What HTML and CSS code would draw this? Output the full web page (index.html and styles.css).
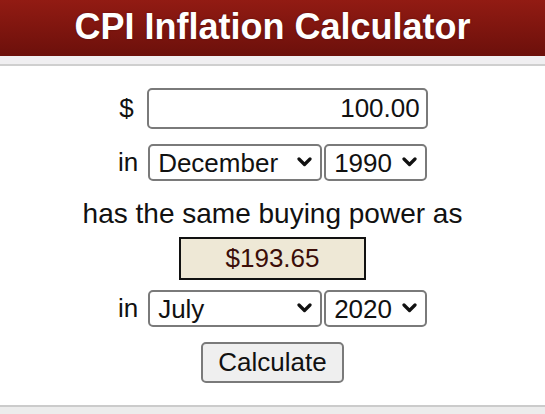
FILE: index.html
```html
<!DOCTYPE html>
<html lang="en">
<head>
    <meta charset="UTF-8">
    <meta name="viewport" content="width=device-width, initial-scale=1.0">
    <title>CPI Inflation Calculator</title>
    <link rel="stylesheet" href="styles.css">
</head>
<body>
    <header class="calc-header">
        <h1>CPI Inflation Calculator</h1>
    </header>
    <div class="header-strip"></div>

    <form class="calc-form" onsubmit="return false">
        <div class="calc-row amount-row">
            <span class="calc-label">$</span>
            <input class="amount" type="text" value="100.00">
        </div>

        <div class="calc-row row-gap">
            <span class="calc-label">in</span>
            <span class="select-wrap month">
                <select>
                    <option>December</option>
                </select>
                <svg class="chevron" viewBox="0 0 15 10"><polyline points="2,2 7.5,7.5 13,2"/></svg>
            </span>
            <span class="select-wrap year">
                <select>
                    <option>1990</option>
                </select>
                <svg class="chevron" viewBox="0 0 15 10"><polyline points="2,2 7.5,7.5 13,2"/></svg>
            </span>
        </div>

        <p class="sentence">has the same buying power as</p>

        <div class="result">$193.65</div>

        <div class="calc-row row-gap-small">
            <span class="calc-label">in</span>
            <span class="select-wrap month">
                <select>
                    <option>July</option>
                </select>
                <svg class="chevron" viewBox="0 0 15 10"><polyline points="2,2 7.5,7.5 13,2"/></svg>
            </span>
            <span class="select-wrap year">
                <select>
                    <option>2020</option>
                </select>
                <svg class="chevron" viewBox="0 0 15 10"><polyline points="2,2 7.5,7.5 13,2"/></svg>
            </span>
        </div>

        <button class="calc-button" type="submit">Calculate</button>
    </form>

    <div class="page-footer"></div>
</body>
</html>
```

FILE: styles.css
```css
/* Page de base */
body {
    margin: 0;
    font-family: "Liberation Sans", Arial, sans-serif;
    color: #111;
    background: #fff;
}

/* Bandeau rouge du titre */
.calc-header {
    height: 56px;
    background: linear-gradient(#921b13, #6c100b);
    display: flex;
    align-items: center;
    justify-content: center;
}

.calc-header h1 {
    margin: 0;
    padding-bottom: 3px;
    color: #fff;
    font-size: 36px;
    font-weight: bold;
    text-shadow: 0 0 2px rgba(0, 0, 0, 0.35);
}

.header-strip {
    height: 8px;
    background: #f0eff1;
    border-bottom: 2px solid #cfcfcf;
}

/* Formulaire */
.calc-form {
    display: flex;
    flex-direction: column;
    align-items: center;
    padding-top: 22px;
    font-size: 26px;
}

.calc-row {
    display: flex;
    align-items: center;
    gap: 2px;
}

.amount-row {
    padding-left: 2px;
}

.amount-row .calc-label {
    margin-right: 11px;
}

.row-gap {
    margin-top: 15px;
}

.row-gap-small {
    margin-top: 10px;
}

.calc-label {
    margin-right: 8px;
}

.amount {
    box-sizing: border-box;
    width: 281px;
    height: 41px;
    border: 2px solid #7a7a7a;
    border-radius: 5px;
    padding: 0 6px;
    font-family: inherit;
    font-size: 26px;
    text-align: right;
    color: #111;
}

/* Listes déroulantes */
.select-wrap {
    position: relative;
    display: inline-block;
}

.select-wrap select {
    appearance: none;
    -webkit-appearance: none;
    box-sizing: border-box;
    height: 37px;
    border: 2px solid #7a7a7a;
    border-radius: 5px;
    background: #fff;
    padding: 0 8px;
    font-family: inherit;
    font-size: 26px;
    color: #111;
}

.month select {
    width: 174px;
}

.year select {
    width: 103px;
}

.chevron {
    position: absolute;
    right: 10px;
    top: 13px;
    width: 15px;
    height: 10px;
    pointer-events: none;
}

.chevron polyline {
    fill: none;
    stroke: #111;
    stroke-width: 3.2;
    stroke-linecap: round;
    stroke-linejoin: round;
}

.sentence {
    margin: 17px 0 0;
    line-height: 32px;
    font-size: 28px;
}

/* Résultat */
.result {
    box-sizing: border-box;
    margin-top: 7px;
    width: 187px;
    height: 43px;
    line-height: 39px;
    text-align: center;
    background: #eee8d6;
    border: 2px solid #111;
    color: #3b0d08;
}

.calc-button {
    margin-top: 15px;
    box-sizing: border-box;
    width: 143px;
    height: 41px;
    border: 2px solid #7a7a7a;
    border-radius: 5px;
    background: #efefef;
    font-family: inherit;
    font-size: 26px;
    color: #111;
}

.page-footer {
    margin-top: 22px;
    height: 10px;
    background: #ececec;
    border-top: 2px solid #cbcbcb;
}
```
